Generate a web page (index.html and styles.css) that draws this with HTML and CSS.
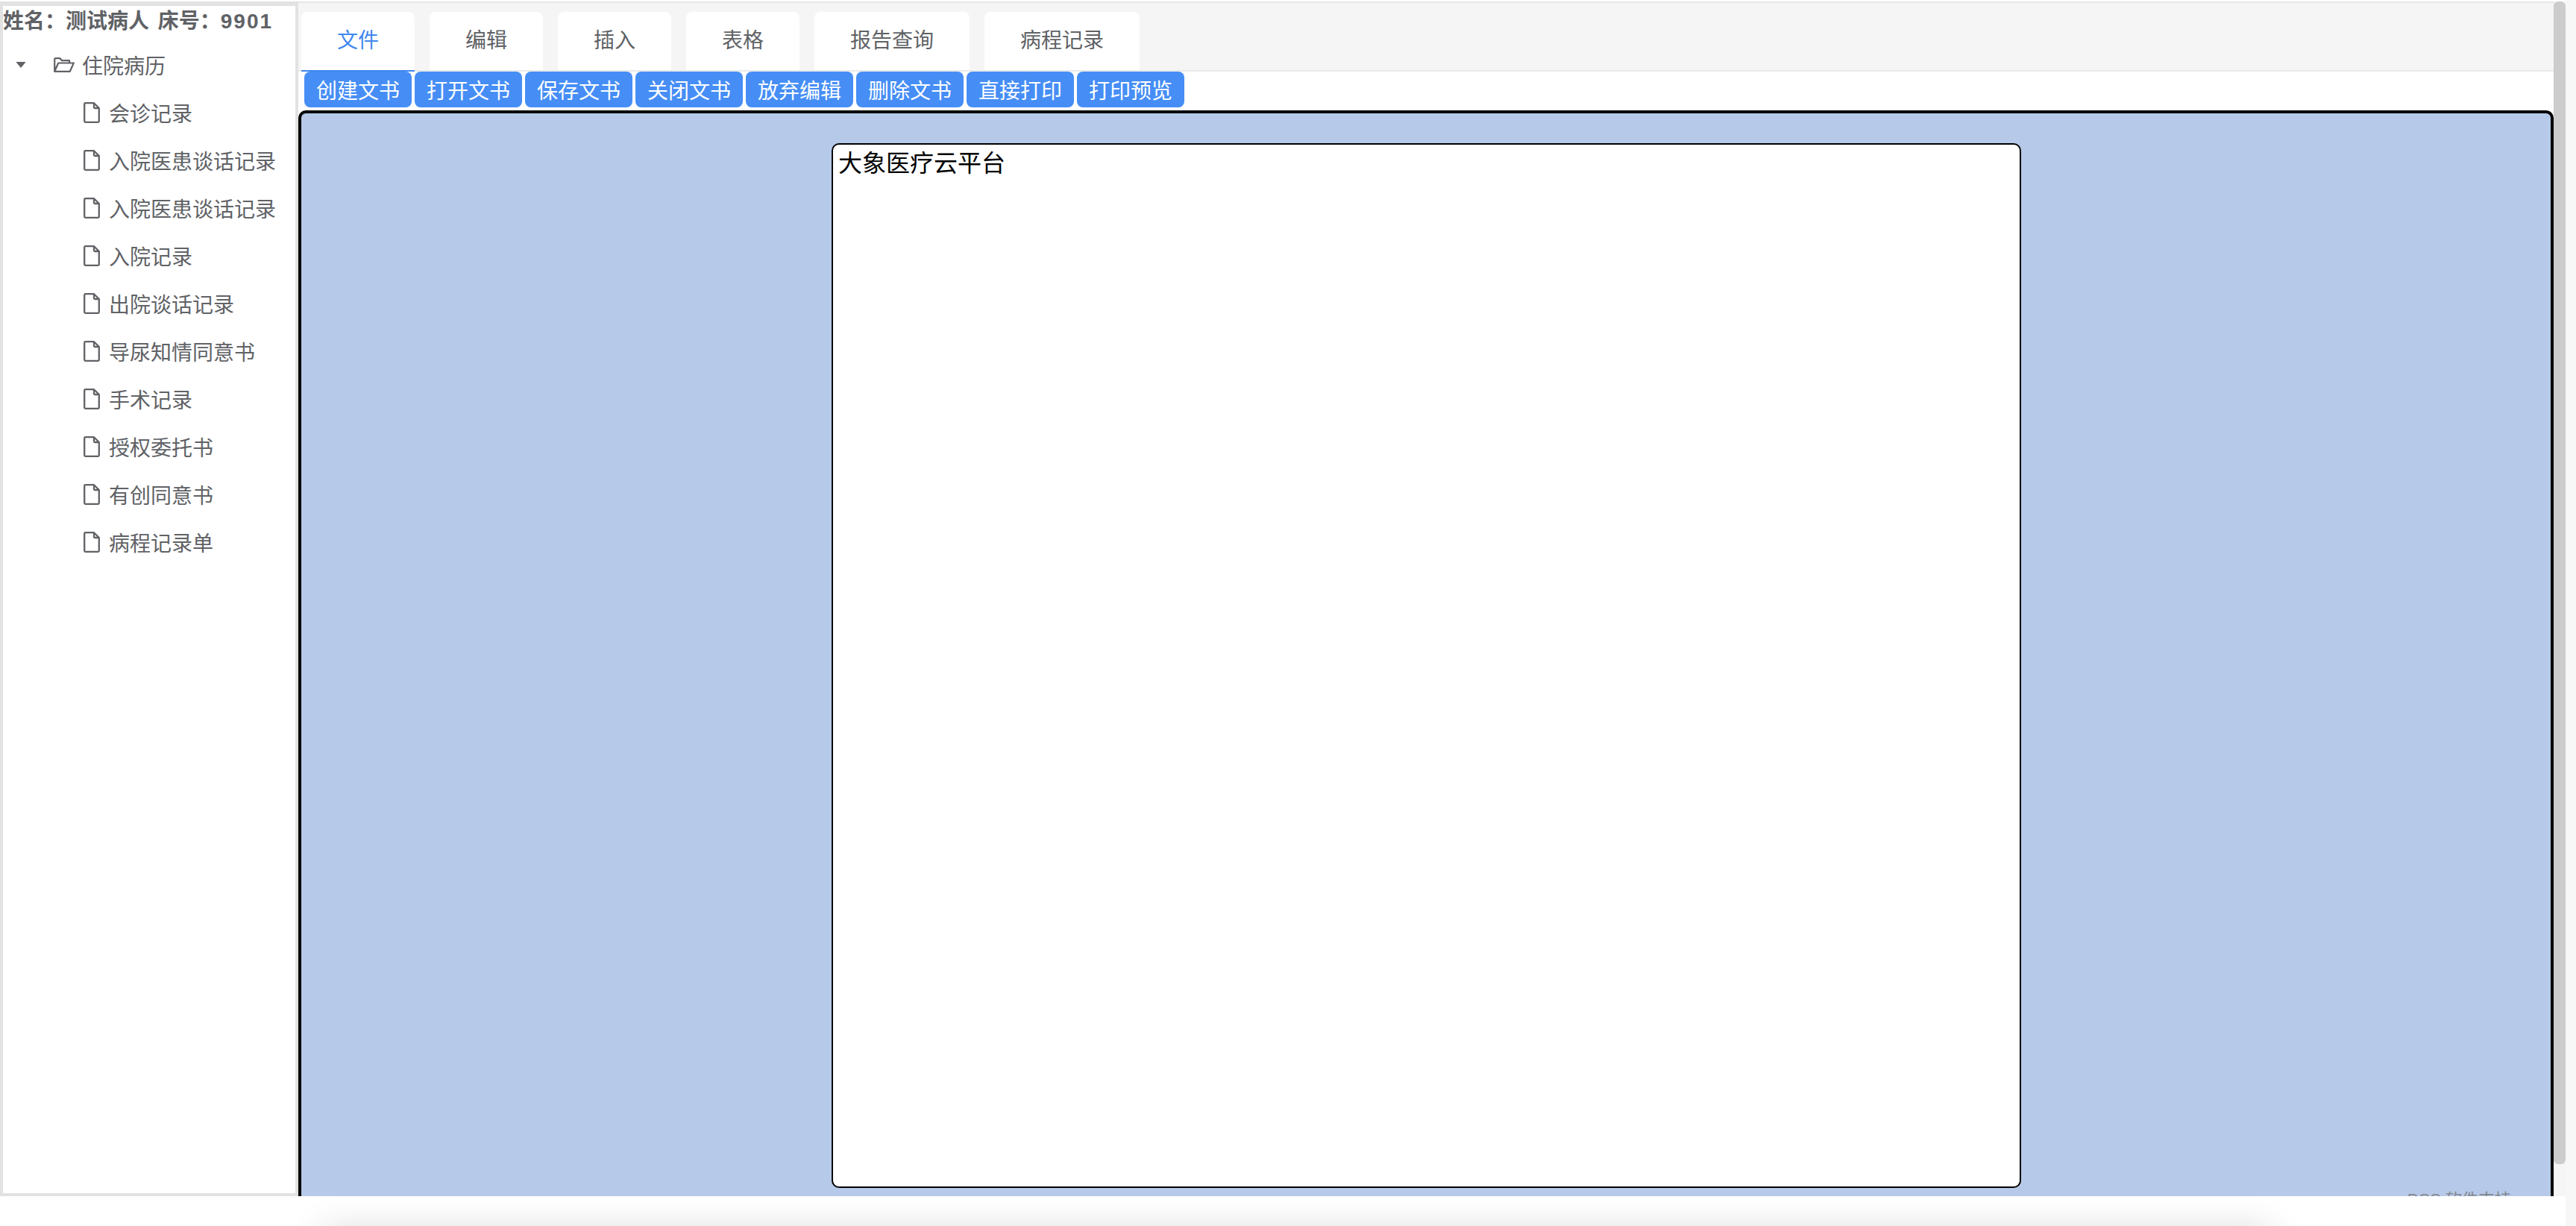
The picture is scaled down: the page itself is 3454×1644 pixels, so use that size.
FILE: index.html
```html
<!DOCTYPE html>
<html lang="zh-CN">
<head>
  <meta charset="UTF-8" />
  <title>住院病历</title>
  <link rel="stylesheet" href="styles.css">
</head>
<body>
  <div class="window">
    <div class="app">
      <div class="app-main">
        <!-- Patient tree -->
        <aside class="sidebar">
          <div class="patient">姓名：测试病人 床号：<span class="bed-no">9901</span></div>
          <ul class="tree">
            <li class="tree-node tree-root">
              <svg class="caret" viewBox="0 0 14 8"><path d="M0.300 0H13.700L7 8z"/></svg>
              <svg class="folder" viewBox="0 0 28 20"><path d="M1.200 18.800V2.500Q1.200 1.200 2.500 1.200H8.500L11 4.200H21V7.500M1.200 18.800H21.800L26.800 7.500H6.200z"/></svg>
              <span>住院病历</span>
            </li>
            <li class="tree-node tree-leaf"><svg class="file" viewBox="0 0 22 28"><path d="M2.500 1.200H14L20.800 8V25.500Q20.800 26.800 19.500 26.800H2.500Q1.200 26.800 1.200 25.500V2.500Q1.200 1.200 2.500 1.200zM14 1.200V6.800Q14 8 15.200 8H20.800"/></svg><span>会诊记录</span></li>
            <li class="tree-node tree-leaf"><svg class="file" viewBox="0 0 22 28"><path d="M2.500 1.200H14L20.800 8V25.500Q20.800 26.800 19.500 26.800H2.500Q1.200 26.800 1.200 25.500V2.500Q1.200 1.200 2.500 1.200zM14 1.200V6.800Q14 8 15.200 8H20.800"/></svg><span>入院医患谈话记录</span></li>
            <li class="tree-node tree-leaf"><svg class="file" viewBox="0 0 22 28"><path d="M2.500 1.200H14L20.800 8V25.500Q20.800 26.800 19.500 26.800H2.500Q1.200 26.800 1.200 25.500V2.500Q1.200 1.200 2.500 1.200zM14 1.200V6.800Q14 8 15.200 8H20.800"/></svg><span>入院医患谈话记录</span></li>
            <li class="tree-node tree-leaf"><svg class="file" viewBox="0 0 22 28"><path d="M2.500 1.200H14L20.800 8V25.500Q20.800 26.800 19.500 26.800H2.500Q1.200 26.800 1.200 25.500V2.500Q1.200 1.200 2.500 1.200zM14 1.200V6.800Q14 8 15.200 8H20.800"/></svg><span>入院记录</span></li>
            <li class="tree-node tree-leaf"><svg class="file" viewBox="0 0 22 28"><path d="M2.500 1.200H14L20.800 8V25.500Q20.800 26.800 19.500 26.800H2.500Q1.200 26.800 1.200 25.500V2.500Q1.200 1.200 2.500 1.200zM14 1.200V6.800Q14 8 15.200 8H20.800"/></svg><span>出院谈话记录</span></li>
            <li class="tree-node tree-leaf"><svg class="file" viewBox="0 0 22 28"><path d="M2.500 1.200H14L20.800 8V25.500Q20.800 26.800 19.500 26.800H2.500Q1.200 26.800 1.200 25.500V2.500Q1.200 1.200 2.500 1.200zM14 1.200V6.800Q14 8 15.200 8H20.800"/></svg><span>导尿知情同意书</span></li>
            <li class="tree-node tree-leaf"><svg class="file" viewBox="0 0 22 28"><path d="M2.500 1.200H14L20.800 8V25.500Q20.800 26.800 19.500 26.800H2.500Q1.200 26.800 1.200 25.500V2.500Q1.200 1.200 2.500 1.200zM14 1.200V6.800Q14 8 15.200 8H20.800"/></svg><span>手术记录</span></li>
            <li class="tree-node tree-leaf"><svg class="file" viewBox="0 0 22 28"><path d="M2.500 1.200H14L20.800 8V25.500Q20.800 26.800 19.500 26.800H2.500Q1.200 26.800 1.200 25.500V2.500Q1.200 1.200 2.500 1.200zM14 1.200V6.800Q14 8 15.200 8H20.800"/></svg><span>授权委托书</span></li>
            <li class="tree-node tree-leaf"><svg class="file" viewBox="0 0 22 28"><path d="M2.500 1.200H14L20.800 8V25.500Q20.800 26.800 19.500 26.800H2.500Q1.200 26.800 1.200 25.500V2.500Q1.200 1.200 2.500 1.200zM14 1.200V6.800Q14 8 15.200 8H20.800"/></svg><span>有创同意书</span></li>
            <li class="tree-node tree-leaf"><svg class="file" viewBox="0 0 22 28"><path d="M2.500 1.200H14L20.800 8V25.500Q20.800 26.800 19.500 26.800H2.500Q1.200 26.800 1.200 25.500V2.500Q1.200 1.200 2.500 1.200zM14 1.200V6.800Q14 8 15.200 8H20.800"/></svg><span>病程记录单</span></li>
          </ul>
        </aside>

        <main class="workspace">
          <nav class="tabs">
            <div class="tab active">文件</div>
            <div class="tab">编辑</div>
            <div class="tab">插入</div>
            <div class="tab">表格</div>
            <div class="tab">报告查询</div>
            <div class="tab">病程记录</div>
          </nav>
          <div class="toolbar">
            <button class="tool-btn">创建文书</button>
            <button class="tool-btn">打开文书</button>
            <button class="tool-btn">保存文书</button>
            <button class="tool-btn">关闭文书</button>
            <button class="tool-btn">放弃编辑</button>
            <button class="tool-btn">删除文书</button>
            <button class="tool-btn">直接打印</button>
            <button class="tool-btn">打印预览</button>
          </div>
          <section class="editor">
            <div class="paper">大象医疗云平台</div>
            <div class="powered">DSS 软件支持</div>
          </section>
        </main>

        <div class="scroll-rail"><div class="scroll-thumb"></div></div>
      </div>
      <div class="app-foot"></div>
    </div>
  </div>
</body>
</html>
```

FILE: styles.css
```css
/* Page frame */
html, body {
  margin: 0;
  height: 100%;
  overflow: hidden;
  background: #fff;
}
body {
  font-family: "Liberation Sans", "Noto Sans CJK SC", sans-serif;
  color: #606266;
}
ul {
  margin: 0;
  padding: 0;
  list-style: none;
}
.window {
  display: flex;
  height: 1644px;
  background: #f7f7f7;
}
.app {
  width: 3440px;
  display: flex;
  flex-direction: column;
  background: #fff;
}
.app-main {
  height: 1602px;
  margin-top: 2px;
  display: flex;
}

/* Sidebar */
.sidebar {
  width: 400px;
  box-sizing: border-box;
  border: solid #e2e2e2;
  border-width: 6px 4px 4px 4px;
  background: #fff;
}
.patient {
  height: 42px;
  line-height: 42px;
  font-size: 28px;
  font-weight: bold;
  word-spacing: 4px;
  white-space: nowrap;
}
.bed-no {
  letter-spacing: 2px;
}
.tree {
  margin-top: 5px;
}
.tree-node {
  height: 64px;
  display: flex;
  align-items: center;
  font-size: 28px;
  white-space: nowrap;
}
.tree-root {
  padding-left: 17px;
}
.tree-leaf {
  padding-left: 108px;
}
.caret {
  width: 14px;
  height: 8px;
  fill: #606266;
}
.folder {
  width: 28px;
  height: 20px;
  margin-left: 37px;
  margin-right: 10px;
  fill: none;
  stroke: #606266;
  stroke-width: 2.200;
  stroke-linejoin: round;
}
.file {
  width: 22px;
  height: 28px;
  margin-right: 12px;
  fill: none;
  stroke: #606266;
  stroke-width: 2.300;
  stroke-linejoin: round;
}

/* Tabs and toolbar */
.workspace {
  width: 3024px;
  display: flex;
  flex-direction: column;
  border-top: 2px solid #e6e6e6;
  min-height: 0;
}
.tabs {
  height: 92px;
  box-sizing: border-box;
  padding: 12px 0 0 4px;
  display: flex;
  gap: 20px;
  background: #f5f5f5;
  border-bottom: 2px solid #e9e9e9;
}
.tab {
  height: 78px;
  padding: 0 48px 6px;
  box-sizing: border-box;
  display: flex;
  align-items: center;
  background: #fff;
  border-radius: 8px 8px 0 0;
  font-size: 28px;
}
.tab.active {
  color: #3f87ef;
  box-shadow: 0 2px 0 #3f87ef;
}
.toolbar {
  height: 52px;
  box-sizing: border-box;
  padding-left: 8px;
  display: flex;
  align-items: flex-start;
  gap: 4px;
  background: #fff;
}
.tool-btn {
  width: 144px;
  height: 48px;
  padding: 0;
  border: none;
  border-radius: 8px;
  background: #468ef6;
  color: #fff;
  font: 28px "Liberation Sans", "Noto Sans CJK SC", sans-serif;
}

/* Editor */
.editor {
  flex: 1;
  min-height: 0;
  position: relative;
  overflow: hidden;
  border: 4px solid #000;
  border-bottom: none;
  border-radius: 10px 10px 0 0;
  background: #b6c9e8;
  padding: 40px 0 0 711px;
}
.paper {
  width: 1595px;
  height: 1401px;
  box-sizing: border-box;
  border: 2px solid #000;
  border-radius: 10px;
  background: #fff;
  padding: 7px;
  font-size: 32px;
  line-height: 36px;
  color: #000;
}
/* cut off by the bottom of the frame, as in the real page */
.powered {
  position: absolute;
  right: 53px;
  bottom: -17px;
  font-size: 22px;
  line-height: 24px;
  color: #83878f;
  white-space: nowrap;
}
.scroll-rail {
  width: 16px;
  background: #f5f5f5;
}
.scroll-thumb {
  height: 1559px;
  background: #ccc;
  border-radius: 6px;
}

/* Soft shadow of whatever sits under the page */
.app-foot {
  flex: 1;
  position: relative;
  overflow: hidden;
}
.app-foot::after {
  content: '';
  position: absolute;
  left: 440px;
  right: 400px;
  top: 52px;
  height: 40px;
  box-shadow: 0 0 50px 6px rgba(0,0,0,0.16);
}
```
